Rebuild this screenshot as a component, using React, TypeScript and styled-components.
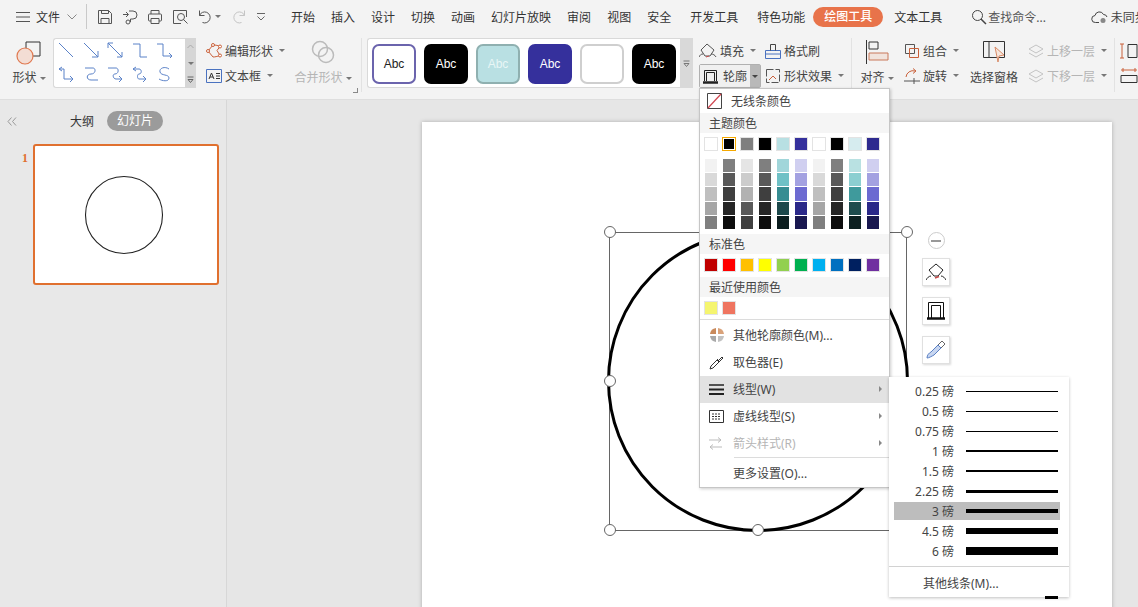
import React from "react";
import styled, { createGlobalStyle } from "styled-components";

const FONT = `"Noto Sans", "Noto Sans CJK SC", sans-serif`;

const GlobalStyle = createGlobalStyle`
  html, body {
    margin: 0;
    padding: 0;
    background: #e6e6e6;
    font-family: ${FONT};
  }
  * {
    box-sizing: border-box;
  }
`;

const Ic = ({ w = 16, h = 16, s = "#555", children }: { w?: number; h?: number; s?: string; children: React.ReactNode }) => (
  <svg width={w} height={h} viewBox={`0 0 ${w} ${h}`} fill="none" stroke={s} strokeWidth="1" style={{ flex: "none", display: "block" }}>
    {children}
  </svg>
);

const TABS = ["开始", "插入", "设计", "切换", "动画", "幻灯片放映", "审阅", "视图", "安全", "开发工具", "特色功能"];

const LINE_GLYPHS = [
  "M1 1l14 14",
  "M1 1l14 14M15 9v6H9",
  "M1 1l14 14M1 6V1h5M15 10v5h-5",
  "M1 2h7v13h7",
  "M1 2h6v12h8M13 11l3 3-3 3",
  "M4 1L1 3l3 2M1 3h5v10h8M12 10l3 3-3 3",
  "M2 2h8c3 0 3 6-2 6-5 0-5 6 0 6h7",
  "M1 2h8c3 0 3 6-1 6-3 0-2 5 1 5h6M12 10l3 3-3 3",
  "M4 1L1 3l3 2M1 3h6c3 0 3 5 0 5-2 0-2 5 0 5h7M11 10l3 3-3 3",
  "M13 3c-4-3-10-1-9 3 1 4 9 2 9 6 0 4-7 3-10 1",
];

const STYLE_CARDS = [
  { bg: "#fff", line: "#6b64ad", color: "#222", label: "Abc" },
  { bg: "#000", line: "#000", color: "#fff", label: "Abc" },
  { bg: "#b9e0e3", line: "#8fb0b0", color: "#e8f6f6", label: "Abc" },
  { bg: "#35309c", line: "#35309c", color: "#fff", label: "Abc" },
  { bg: "#fff", line: "#cfcfcf", color: "#fff", label: "" },
  { bg: "#000", line: "#000", color: "#fff", label: "Abc" },
];

const THEME = ["#ffffff", "#000000", "#7f7f7f", "#000000", "#b8e0e3", "#35309c", "#ffffff", "#000000", "#d6ecef", "#2e2a8f"];
const TINTS = [
  ["#f2f2f2", "#d9d9d9", "#bfbfbf", "#a6a6a6", "#7f7f7f"],
  ["#7f7f7f", "#595959", "#3f3f3f", "#262626", "#0d0d0d"],
  ["#e5e5e5", "#cccccc", "#b2b2b2", "#595959", "#404040"],
  ["#7f7f7f", "#595959", "#3f3f3f", "#262626", "#0d0d0d"],
  ["#a1d6da", "#6fc1c6", "#378d92", "#1c484b", "#0b1d1e"],
  ["#d0cff0", "#a3a1e1", "#6c6ad1", "#2a2889", "#191850"],
  ["#f2f2f2", "#d9d9d9", "#bfbfbf", "#a6a6a6", "#7f7f7f"],
  ["#7f7f7f", "#595959", "#3f3f3f", "#262626", "#0d0d0d"],
  ["#b9e1e2", "#8ccfd1", "#3f9a9c", "#1e4c4e", "#0d2021"],
  ["#d0cff0", "#a3a1e1", "#6c6ad1", "#2a2889", "#191850"],
];
const STANDARD = ["#c00000", "#ff0000", "#ffc000", "#ffff00", "#92d050", "#00b050", "#00b0f0", "#0070c0", "#002060", "#7030a0"];
const RECENT = ["#f5f56f", "#ef7560"];
const WEIGHTS = [
  { label: "0.25 磅", h: 1 },
  { label: "0.5 磅", h: 1 },
  { label: "0.75 磅", h: 1 },
  { label: "1 磅", h: 2 },
  { label: "1.5 磅", h: 2 },
  { label: "2.25 磅", h: 3 },
  { label: "3 磅", h: 4, active: true },
  { label: "4.5 磅", h: 6 },
  { label: "6 磅", h: 8 },
];

function App() {
  return (
    <Page>
      <GlobalStyle />
      <Header>
        <TopBar>
          <Ic w={14} h={12}>
            <path d="M0 1.5h14M0 6h14M0 10.5h14" />
          </Ic>
          <FileLabel>文件</FileLabel>
          <Ic w={10} h={6} s="#888">
            <path d="M.5.5L5 5 9.5.5" />
          </Ic>
          <TopDivider />
          <QuickIcons>
            <Ic>
              <path d="M1.5 1.5h10l3 3v10h-13zM4.5 1.5v3h7v-3M4 14.5v-5h8v5" />
            </Ic>
            <Ic>
              <path d="M1 5.5h5M4 3l2.5 2.5L4 8M7 2h4a4 4 0 0 1 0 8H8.500v3" />
              <circle cx="6" cy="13" r="2" />
            </Ic>
            <Ic>
              <path d="M4 5V1.500h8V5M4 12H2.500a1 1 0 0 1-1-1V6a1 1 0 0 1 1-1h11a1 1 0 0 1 1 1v5a1 1 0 0 1-1 1H12M4 9.500h8v5H4z" />
            </Ic>
            <Ic>
              <path d="M9 14.500H1.500v-13h13V8" />
              <circle cx="9" cy="8" r="3.500" />
              <path d="M11.500 10.500l4 4" />
            </Ic>
            <UndoGroup>
              <Ic w={15} h={15}>
                <path d="M2.500 1.500v5h5M2.500 6.500a5.500 5.500 0 1 1 3 7" />
              </Ic>
              <Caret />
            </UndoGroup>
            <Ic w={14} h={15} s="#c4c4c4">
              <path d="M11.500 1.500v5h-5M11.500 6.500a5.500 5.500 0 1 0-3 7" />
            </Ic>
            <Ic w={10} h={8} s="#666">
              <path d="M1 .5h8M1.500 3.500L5 7l3.500-3.500" />
            </Ic>
          </QuickIcons>
          <TabList>
            {TABS.map((t) => (
              <Tab key={t} $left={t.length === 4 ? 3 : 0}>
                {t}
              </Tab>
            ))}
          </TabList>
          <ActiveTab>绘图工具</ActiveTab>
          <Tab $left={11}>文本工具</Tab>
          <SearchBox>
            <Ic w={16} h={16} s="#444">
              <circle cx="6.500" cy="6.500" r="5" />
              <path d="M10 10l5 5" strokeWidth="1.500" />
            </Ic>
            查找命令...
          </SearchBox>
          <SyncBox>
            <Ic w={17} h={14} s="#444">
              <path d="M8 12.500H4.500a3.500 3.500 0 0 1-.500-7A4.500 4.500 0 0 1 12.500 4.500 3.500 3.500 0 0 1 16 7" />
              <circle cx="12" cy="10.500" r="2.500" fill="#888" stroke="none" />
            </Ic>
            未同步
          </SyncBox>
        </TopBar>

        <Ribbon>
          <BigButton $width={32}>
            <Ic w={28} h={26}>
              <path d="M11 2h14v14H11z" stroke="#333" />
              <circle cx="10" cy="16" r="8" fill="#f3ddd4" stroke="#e0784f" strokeWidth="1.200" />
            </Ic>
            <BigLabel>
              形状
              <Caret />
            </BigLabel>
          </BigButton>

          <Gallery $left={8} $width={132}>
            <LineGrid>
              {LINE_GLYPHS.map((d) => (
                <Ic key={d} s="#5b82c8">
                  <path d={d} />
                </Ic>
              ))}
            </LineGrid>
          </Gallery>
          <GalleryScroll>
            <ScrollCell>
              <Ic w={7} h={5} s="#aaa">
                <path d="M.500 4L3.500 1l3 3" />
              </Ic>
            </ScrollCell>
            <ScrollCell>
              <Caret />
            </ScrollCell>
            <ScrollCell>
              <Ic w={7} h={7} s="#666">
                <path d="M.500 1h6M1 3.500h5L3.500 6.500z" />
              </Ic>
            </ScrollCell>
          </GalleryScroll>

          <SmallCol $left={10} $width={80}>
            <SmallItem>
              <Ic w={16} h={16} s="#c9603a">
                <path d="M2 8L7 2c3 0 5 .5 7 1.500l-3 4 3 5c-3 1-5 1.500-7 1.500z" />
                <circle cx="2" cy="8" r="1.500" fill="#fff" />
                <circle cx="7" cy="2" r="1.500" fill="#fff" />
                <circle cx="14" cy="3.500" r="1.500" fill="#fff" />
                <circle cx="14" cy="12.500" r="1.500" fill="#fff" />
              </Ic>
              编辑形状
              <Caret />
            </SmallItem>
            <SmallItem>
              <Ic w={16} h={14} s="#4a72c0">
                <path d="M.500.500h15v13H.500z" />
                <path d="M3 10l2.500-6L8 10M4 8h3M10 4.500h4M10 7h4M10 9.500h4" stroke="#333" />
              </Ic>
              文本框
              <Caret />
            </SmallItem>
          </SmallCol>

          <BigButton $width={60} $left={7} $disabled>
            <Ic w={24} h={24} s="#bbb">
              <circle cx="9" cy="9" r="7.500" strokeWidth="1.500" />
              <circle cx="15" cy="15" r="7.500" strokeWidth="1.500" />
            </Ic>
            <BigLabel>
              合并形状
              <Caret />
            </BigLabel>
          </BigButton>
          <Launcher />
          <GroupDivider $left={3} />

          <Gallery $left={5} $width={313}>
            <CardRow>
              {STYLE_CARDS.map((c, i) => (
                <StyleCard key={i} $bg={c.bg} $line={c.line} $color={c.color}>
                  {c.label}
                </StyleCard>
              ))}
            </CardRow>
          </Gallery>
          <CardScroll>
            <Ic w={7} h={7} s="#777">
              <path d="M.500 1h6M1 3.500h5L3.500 6.500z" />
            </Ic>
          </CardScroll>

          <SmallCol $left={6} $width={62}>
            <SmallItem>
              <Ic w={18} h={16}>
                <path d="M8 1l7 6-4 6H6L2 7z" />
                <path d="M0 14c1-2 2-3 4-3M12 11c2 0 4 1 5 3" />
                <path d="M7 14l3-1" stroke="#c84b4b" />
              </Ic>
              填充
              <Caret />
            </SmallItem>
            <OutlineSplit>
              <OutlineMain>
                <Ic w={15} h={15} s="#222">
                  <path d="M1.500 12V1.500h12V12M3.500 12V3.500h8V12" />
                  <path d="M0 13.500h15" strokeWidth="2.500" />
                </Ic>
                轮廓
              </OutlineMain>
              <OutlineCaret>
                <Caret />
              </OutlineCaret>
            </OutlineSplit>
          </SmallCol>

          <SmallCol $left={4} $width={82}>
            <SmallItem>
              <Ic w={16} h={16} s="#4a72c0">
                <path d="M.500 7.500h15v8H.500zM.500 11h15" />
                <path d="M5.500 7.500v-6h5v6" stroke="#444" />
              </Ic>
              格式刷
            </SmallItem>
            <SmallItem>
              <Ic w={16} h={16}>
                <path d="M1.500 1.500h13v13h-13z" strokeDasharray="7 2" />
                <path d="M4 12l4-4 3 3" stroke="#c9603a" />
              </Ic>
              形状效果
              <Caret />
            </SmallItem>
          </SmallCol>

          <GroupDivider $left={4} />

          <BigButton $width={34} $left={8}>
            <Ic w={24} h={24} s="#333">
              <path d="M1.500 0v24" />
              <path d="M4 2h9v7H4z" />
              <path d="M4 13h19v7H4z" stroke="#c9785a" fill="#f1e3dc" />
            </Ic>
            <BigLabel>
              对齐
              <Caret />
            </BigLabel>
          </BigButton>

          <SmallCol $left={10} $width={56}>
            <SmallItem>
              <Ic w={16} h={16}>
                <path d="M1.500 1.500h9v9h-9z" />
                <path d="M5.500 5.500h9v9h-9z" stroke="#c9603a" />
              </Ic>
              组合
              <Caret />
            </SmallItem>
            <SmallItem>
              <Ic w={16} h={16}>
                <path d="M2 9a7 7 0 0 1 9-6" stroke="#c9603a" />
                <path d="M9 .500L12 3 9 5.500" stroke="#c9603a" />
                <path d="M0 13h16M10 10v6" />
              </Ic>
              旋转
              <Caret />
            </SmallItem>
          </SmallCol>

          <BigButton $width={50} $left={9}>
            <Ic w={24} h={24}>
              <path d="M1.500 1.500h21v16h-21zM7 1.500v16" stroke="#333" />
              <path d="M13 7l9 8-5 1-1 6z" fill="#f7e6dc" stroke="#d98a66" />
            </Ic>
            <BigLabel>选择窗格</BigLabel>
          </BigButton>

          <SmallCol $left={9} $width={80} $disabled>
            <SmallItem>
              <Ic w={16} h={14} s="#c4c4c4">
                <path d="M8 1l7 4-7 4-7-4zM1 9l7 4 7-4" />
              </Ic>
              上移一层
              <Caret />
            </SmallItem>
            <SmallItem>
              <Ic w={16} h={14} s="#c4c4c4">
                <path d="M8 1l7 4-7 4-7-4zM1 9l7 4 7-4" />
              </Ic>
              下移一层
              <Caret />
            </SmallItem>
          </SmallCol>

          <GroupDivider $left={6} />

          <SmallCol $left={5} $width={20}>
            <SmallItem>
              <Ic w={18} h={16} s="#333">
                <path d="M2 1v14M0 1h4M0 15h4" stroke="#c9603a" />
                <path d="M8 1.500h9v13H8z" />
              </Ic>
            </SmallItem>
            <SmallItem>
              <Ic w={18} h={16} s="#333">
                <path d="M1 2h16M3 0v4M15 0v4" stroke="#c9603a" />
                <path d="M1 7.500h16v7H1z" />
              </Ic>
            </SmallItem>
          </SmallCol>
        </Ribbon>
      </Header>

      <Main>
        <Side>
          <SideTabs>
            <Ic w={10} h={9} s="#999">
              <path d="M4.500.500L1 4.500l3.500 4M9 .500L5.500 4.500 9 8.500" />
            </Ic>
            <SideTab>大纲</SideTab>
            <SidePill>幻灯片</SidePill>
          </SideTabs>
          <ThumbRow>
            <ThumbNumber>1</ThumbNumber>
            <Thumb>
              <svg width="182" height="137" viewBox="0 0 182 137" fill="none" style={{ display: "block" }}>
                <circle cx="89" cy="69" r="38.500" stroke="#222" strokeWidth="1.100" />
              </svg>
            </Thumb>
          </ThumbRow>
        </Side>

        <Canvas>
          <Slide>
            <SelectionSvg width="690" height="485" viewBox="0 0 690 485" fill="none">
              <rect x="187.500" y="110.500" width="297" height="298" stroke="#666" />
              <circle cx="336" cy="259" r="149.500" stroke="#000" strokeWidth="3" />
              {[
                [188, 110],
                [485, 110],
                [188, 259],
                [188, 408],
                [336, 408],
                [485, 408],
              ].map(([x, y]) => (
                <circle key={`${x}-${y}`} cx={x} cy={y} r="5.500" fill="#fff" stroke="#666" />
              ))}
            </SelectionSvg>
            <FloatTools>
              <MinusButton>
                <Ic w={10} h={2} s="#999">
                  <path d="M0 1h10" strokeWidth="2" />
                </Ic>
              </MinusButton>
              <FloatButton>
                <Ic w={20} h={20} s="#222">
                  <path d="M3 8l7-6 7 6-5 6H8z" />
                  <path d="M0 18c1-2 3-4 5-4M15 14c2 0 4 2 5 4" />
                  <path d="M9 16l4-1.500" stroke="#c84b4b" strokeWidth="1.500" />
                </Ic>
              </FloatButton>
              <FloatButton>
                <Ic w={18} h={18} s="#111">
                  <path d="M1.500 16V.500h15V16M4.500 16V3.500h9V16" />
                  <path d="M0 16.500h18" strokeWidth="2.500" />
                </Ic>
              </FloatButton>
              <FloatButton>
                <Ic w={20} h={20} s="#5a80c4">
                  <path d="M1 18c0-3 2-5 4-6l7-7 3 3-7 7c-2 1-5 3-7 3z" fill="#c8d6f0" />
                  <path d="M12 5l4-4 3 3-4 4" stroke="#666" />
                </Ic>
              </FloatButton>
            </FloatTools>
          </Slide>
        </Canvas>
      </Main>

      <OutlineMenu>
        <TopItem>
          <Ic w={15} h={16} s="#444">
            <path d="M.500.500h14v15H.500z" />
            <path d="M1 15L14 1" stroke="#d0454f" strokeWidth="1.200" />
          </Ic>
          无线条颜色
        </TopItem>
        <SectionHead>主题颜色</SectionHead>
        <SwatchRow>
          {THEME.map((c, i) => (
            <Swatch key={i} $color={c} $selected={i === 1} />
          ))}
        </SwatchRow>
        <TintGrid>
          {TINTS.map((col, i) => (
            <TintCol key={i}>
              {col.map((c) => (
                <TintCell key={c} $color={c} />
              ))}
            </TintCol>
          ))}
        </TintGrid>
        <SectionHead $top={5}>标准色</SectionHead>
        <SwatchRow>
          {STANDARD.map((c) => (
            <Swatch key={c} $color={c} />
          ))}
        </SwatchRow>
        <SectionHead $top={5}>最近使用颜色</SectionHead>
        <SwatchRow>
          {RECENT.map((c) => (
            <Swatch key={c} $color={c} />
          ))}
        </SwatchRow>
        <MenuSep $top={4} />
        <MenuItems>
          <MenuItem>
            <MenuIcon>
              <Ic w={16} h={16} s="none">
                <path d="M7 7V1a7 7 0 0 0-6 6z" fill="#c98a5c" />
                <path d="M9 7V1a7 7 0 0 1 6 6z" fill="#d9a27a" />
                <path d="M7 9H1a7 7 0 0 0 6 6z" fill="#a9a9a9" />
                <path d="M9 9h6a7 7 0 0 1-6 6z" fill="#c2c2c2" />
              </Ic>
            </MenuIcon>
            其他轮廓颜色(M)...
          </MenuItem>
          <MenuItem>
            <MenuIcon>
              <Ic w={15} h={15} s="#333">
                <path d="M1 14l1-3 6-6 2 2-6 6zM8 4l3 3M10 5l3-3 1 1-3 3" />
              </Ic>
            </MenuIcon>
            取色器(E)
          </MenuItem>
          <MenuItem $active>
            <MenuIcon>
              <Ic w={15} h={11} s="#222">
                <path d="M0 1h15" strokeWidth="1.500" />
                <path d="M0 5.500h15" strokeWidth="2" />
                <path d="M0 10h15" strokeWidth="2" />
              </Ic>
            </MenuIcon>
            线型(W)
            <MenuArrow />
          </MenuItem>
          <MenuItem>
            <MenuIcon>
              <Ic w={15} h={13} s="#333">
                <path d="M.500.500h14v12H.500z" />
                <path d="M3 4h9M3 6.500h9M3 9h9" strokeDasharray="2 1" />
              </Ic>
            </MenuIcon>
            虚线线型(S)
            <MenuArrow />
          </MenuItem>
          <MenuItem $disabled>
            <MenuIcon>
              <Ic w={13} h={13} s="#bbb">
                <path d="M0 3h12M9 .500L12 3 9 5.500M13 10H1M4 7.500L1 10l3 2.500" />
              </Ic>
            </MenuIcon>
            箭头样式(R)
            <MenuArrow />
          </MenuItem>
        </MenuItems>
        <MenuSep $inset={34} />
        <MoreItem>
          <MenuIcon />
          更多设置(O)...
        </MoreItem>
      </OutlineMenu>

      <WeightMenu>
        {WEIGHTS.map((w) => (
          <WeightRow key={w.label} $active={w.active}>
            <WeightLabel>{w.label}</WeightLabel>
            <WeightLine $height={w.h} />
          </WeightRow>
        ))}
        <WeightSep />
        <MoreLines>其他线条(M)...</MoreLines>
        <CutOff />
      </WeightMenu>
    </Page>
  );
}

export default App;

const Page = styled.div`
  position: relative;
  width: 1138px;
  height: 607px;
  overflow: hidden;
  display: flex;
  flex-direction: column;
  font-size: 12px;
  color: #444;
`;

const Header = styled.div`
  flex: none;
  height: 100px;
  background: #f3f3f3;
  border-bottom: 1px solid #dedede;
  overflow: hidden;
`;

const TopBar = styled.div`
  display: flex;
  align-items: center;
  height: 33px;
  padding-left: 16px;
  white-space: nowrap;

  > * {
    flex: none;
  }
`;

const FileLabel = styled.span`
  margin: 0 7px 0 6px;
  color: #333;
`;

const TopDivider = styled.div`
  width: 1px;
  height: 25px;
  margin: 0 10px 0 9px;
  background: #c9c9c9;
`;

const QuickIcons = styled.div`
  display: flex;
  align-items: center;
  gap: 9px;
  width: 180px;
`;

const UndoGroup = styled.div`
  display: flex;
  align-items: center;
  margin-right: 3px;
`;

const Caret = styled.span`
  display: inline-block;
  flex: none;
  width: 0;
  height: 0;
  margin-left: 3px;
  border-left: 3px solid transparent;
  border-right: 3px solid transparent;
  border-top: 3px solid #777;
`;

const TabList = styled.div`
  display: flex;
  gap: 16px;
  margin-left: 14px;
`;

const Tab = styled.span<{ $left?: number }>`
  margin-left: ${(p) => p.$left ?? 0}px;
  color: #333;
`;

const ActiveTab = styled.span`
  width: 70px;
  height: 20px;
  margin-left: 8px;
  border-radius: 10px;
  background: #e8734a;
  color: #fff;
  line-height: 20px;
  text-align: center;
  font-weight: 500;
`;

const SearchBox = styled.div`
  display: flex;
  align-items: center;
  gap: 1px;
  margin-left: 29px;
  color: #555;
`;

const SyncBox = styled.div`
  display: flex;
  align-items: center;
  gap: 3px;
  margin-left: 45px;
  color: #444;
`;

const Ribbon = styled.div`
  display: flex;
  align-items: flex-start;
  height: 67px;
  padding: 5px 0 0 13px;
`;

const BigButton = styled.div<{ $width: number; $left?: number; $disabled?: boolean }>`
  flex: none;
  display: flex;
  flex-direction: column;
  align-items: center;
  justify-content: space-between;
  width: ${(p) => p.$width}px;
  height: 46px;
  margin: 2px 0 0 ${(p) => p.$left ?? 0}px;
  color: ${(p) => (p.$disabled ? "#b5b5b5" : "#444")};
  white-space: nowrap;
`;

const BigLabel = styled.span`
  display: flex;
  align-items: center;
  line-height: 16px;
`;

const Gallery = styled.div<{ $left: number; $width: number }>`
  flex: none;
  width: ${(p) => p.$width}px;
  height: 50px;
  margin-left: ${(p) => p.$left}px;
  background: #fff;
  border: 1px solid #d9d9d9;
  border-right: 0;
  border-radius: 3px 0 0 3px;
`;

const LineGrid = styled.div`
  display: grid;
  grid-template-columns: repeat(5, 16px);
  grid-template-rows: repeat(2, 16px);
  column-gap: 8.5px;
  row-gap: 8px;
  padding: 3px 0 0 4px;
`;

const GalleryScroll = styled.div`
  flex: none;
  display: flex;
  flex-direction: column;
  width: 11px;
  height: 50px;
  background: #d6d6d6;
`;

const ScrollCell = styled.div`
  flex: 1;
  display: flex;
  align-items: center;
  justify-content: center;

  ${Caret} {
    margin: 0;
  }
`;

const SmallCol = styled.div<{ $left: number; $width: number; $disabled?: boolean }>`
  flex: none;
  display: flex;
  flex-direction: column;
  width: ${(p) => p.$width}px;
  margin-left: ${(p) => p.$left}px;
  color: ${(p) => (p.$disabled ? "#b5b5b5" : "#444")};
`;

const SmallItem = styled.div`
  display: flex;
  align-items: center;
  gap: 3px;
  height: 25px;
  white-space: nowrap;
`;

const Launcher = styled.div`
  flex: none;
  align-self: flex-end;
  width: 5px;
  height: 5px;
  margin: 0 0 7px 0;
  border-right: 1px solid #888;
  border-bottom: 1px solid #888;
`;

const GroupDivider = styled.div<{ $left: number }>`
  flex: none;
  width: 1px;
  height: 54px;
  margin-left: ${(p) => p.$left}px;
  background: #e2e2e2;
`;

const CardRow = styled.div`
  display: flex;
  gap: 8px;
  padding: 5px 0 0 4px;
`;

const StyleCard = styled.div<{ $bg: string; $line: string; $color: string }>`
  flex: none;
  width: 44px;
  height: 40px;
  border: 2px solid ${(p) => p.$line};
  border-radius: 7px;
  background: ${(p) => p.$bg};
  color: ${(p) => p.$color};
  font-family: "Liberation Sans", sans-serif;
  line-height: 36px;
  text-align: center;
`;

const CardScroll = styled.div`
  flex: none;
  display: flex;
  align-items: center;
  justify-content: center;
  width: 13px;
  height: 50px;
  background: #d9d9d9;
`;

const OutlineSplit = styled.div`
  display: flex;
  height: 24px;
  margin-top: 1px;
  border: 1px solid #b0b0b0;
  border-radius: 2px;
`;

const OutlineMain = styled.div`
  flex: 1;
  display: flex;
  align-items: center;
  gap: 5px;
  padding-left: 3px;
  background: #f0f0f0;
`;

const OutlineCaret = styled.div`
  flex: none;
  display: flex;
  align-items: center;
  justify-content: center;
  width: 10px;
  background: #b9b9b9;

  ${Caret} {
    margin: 0;
    border-top-color: #444;
  }
`;

const Main = styled.div`
  flex: 1;
  display: flex;
  min-height: 0;
`;

const Side = styled.div`
  flex: none;
  width: 227px;
  background: #e8e8e8;
  border-right: 1px solid #d7d7d7;
`;

const SideTabs = styled.div`
  display: flex;
  align-items: center;
  height: 32px;
  padding: 10px 0 0 7px;
`;

const SideTab = styled.span`
  margin-left: 53px;
  color: #333;
`;

const SidePill = styled.span`
  width: 56px;
  height: 20px;
  margin-left: 13px;
  border-radius: 10px;
  background: #9b9b9b;
  color: #fff;
  line-height: 20px;
  text-align: center;
`;

const ThumbRow = styled.div`
  display: flex;
  margin-top: 12px;
  padding-left: 22px;
`;

const ThumbNumber = styled.span`
  width: 11px;
  padding-top: 7px;
  color: #e0702f;
  font-family: "Liberation Serif", serif;
  font-weight: 700;
  font-size: 12px;
`;

const Thumb = styled.div`
  width: 186px;
  height: 141px;
  background: #fff;
  border: 2px solid #e0702f;
  border-radius: 3px;
`;

const Canvas = styled.div`
  flex: 1;
  padding: 22px 26px 0 195px;
  background: #e6e6e6;
  overflow: hidden;
`;

const Slide = styled.div`
  position: relative;
  height: 600px;
  background: #fff;
  box-shadow: 0 0 4px rgba(0, 0, 0, 0.25);
`;

const SelectionSvg = styled.svg`
  position: absolute;
  top: 0;
  left: 0;
`;

const FloatTools = styled.div`
  position: absolute;
  top: 110px;
  left: 500px;
  display: flex;
  flex-direction: column;
  align-items: center;
  gap: 11px;
  width: 28px;
`;

const MinusButton = styled.div`
  display: flex;
  align-items: center;
  justify-content: center;
  width: 17px;
  height: 17px;
  margin-bottom: -2px;
  border: 1px solid #ccc;
  border-radius: 50%;
  background: #fff;
`;

const FloatButton = styled.div`
  display: flex;
  align-items: center;
  justify-content: center;
  width: 28px;
  height: 28px;
  border: 1px solid #e0e0e0;
  background: #fff;
  box-shadow: 1px 1px 2px rgba(0, 0, 0, 0.15);
`;

const OutlineMenu = styled.div`
  position: absolute;
  top: 88px;
  left: 699px;
  width: 191px;
  height: 400px;
  background: #fff;
  border: 1px solid #c6c6c6;
  box-shadow: 1px 1px 3px rgba(0, 0, 0, 0.2);
  white-space: nowrap;
`;

const TopItem = styled.div`
  display: flex;
  align-items: center;
  gap: 9px;
  height: 24px;
  padding-left: 7px;
`;

const SectionHead = styled.div<{ $top?: number }>`
  height: 20px;
  margin-top: ${(p) => p.$top ?? 0}px;
  padding-left: 9px;
  background: #f5f5f5;
  line-height: 22px;
`;

const SwatchRow = styled.div`
  display: flex;
  gap: 4px;
  margin-top: 4px;
  padding-left: 4px;
`;

const Swatch = styled.div<{ $color: string; $selected?: boolean }>`
  width: 14px;
  height: 14px;
  background: ${(p) => p.$color};
  border: 1px solid ${(p) => (p.$selected ? "#f5a800" : "#e3e3e3")};
  box-shadow: ${(p) => (p.$selected ? "inset 0 0 0 1px #fff" : "none")};
`;

const TintGrid = styled.div`
  display: flex;
  gap: 4px;
  margin-top: 8px;
  padding-left: 4px;
`;

const TintCol = styled.div`
  display: flex;
  flex-direction: column;
  gap: 1px;
  padding: 0 1px;
`;

const TintCell = styled.div<{ $color: string }>`
  width: 12px;
  height: 13.200px;
  background: ${(p) => p.$color};
`;

const MenuSep = styled.div<{ $top?: number; $inset?: number }>`
  height: 1px;
  margin: ${(p) => p.$top ?? 0}px 0 0 ${(p) => p.$inset ?? 0}px;
  background: #dcdcdc;
`;

const MenuItems = styled.div`
  padding-top: 2px;
`;

const MenuItem = styled.div<{ $active?: boolean; $disabled?: boolean }>`
  display: flex;
  align-items: center;
  height: 27px;
  padding-left: 9px;
  background: ${(p) => (p.$active ? "#e2e2e2" : "transparent")};
  color: ${(p) => (p.$disabled ? "#b5b5b5" : "#444")};
`;

const MoreItem = styled(MenuItem)`
  margin-top: 2px;
`;

const MenuIcon = styled.span`
  flex: none;
  display: flex;
  justify-content: flex-start;
  width: 24px;
`;

const MenuArrow = styled.span`
  width: 0;
  height: 0;
  margin: 0 7px 0 auto;
  border-top: 3px solid transparent;
  border-bottom: 3px solid transparent;
  border-left: 3px solid #888;
`;

const WeightMenu = styled.div`
  position: absolute;
  top: 377px;
  left: 889px;
  width: 180px;
  height: 220px;
  padding-top: 3px;
  background: #fff;
  box-shadow: 0 1px 3px rgba(0, 0, 0, 0.25);
`;

const WeightRow = styled.div<{ $active?: boolean }>`
  display: flex;
  align-items: center;
  gap: 12px;
  height: 18px;
  margin: 2px 9px 2px 5px;
  background: ${(p) => (p.$active ? "#bdbdbd" : "transparent")};
`;

const WeightLabel = styled.span`
  width: 60px;
  text-align: right;
  white-space: nowrap;
`;

const WeightLine = styled.div<{ $height: number }>`
  width: 92px;
  height: ${(p) => p.$height}px;
  background: #000;
`;

const WeightSep = styled.div`
  height: 1px;
  margin-top: 6px;
  background: #d2d2d2;
`;

const MoreLines = styled.div`
  padding: 7px 0 0 34px;
  white-space: nowrap;
`;

const CutOff = styled.div`
  position: absolute;
  left: 156px;
  bottom: -2px;
  width: 13px;
  height: 3px;
  background: #000;
`;
